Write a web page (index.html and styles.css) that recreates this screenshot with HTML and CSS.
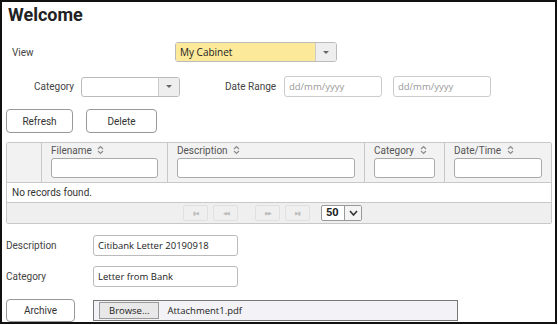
FILE: index.html
```html
<!DOCTYPE html>
<html lang="en">
  <head>
    <meta charset="UTF-8" />
    <title>Welcome</title>
    <link rel="stylesheet" href="styles.css">
  </head>
  <body>
    <div class="frame">
      <h1>Welcome</h1>

      <div class="row row-view">
        <label class="lbl-view">View</label>
        <div class="combo combo-view">
          <span class="combo-text">My Cabinet</span>
          <span class="combo-btn"><span class="caret"></span></span>
        </div>
      </div>

      <div class="row row-filter">
        <label class="lbl-cat">Category</label>
        <div class="combo combo-cat">
          <span class="combo-text"></span>
          <span class="combo-btn"><span class="caret"></span></span>
        </div>
        <label class="lbl-range">Date Range</label>
        <input class="date" type="text" placeholder="dd/mm/yyyy" />
        <input class="date date2" type="text" placeholder="dd/mm/yyyy" />
      </div>

      <div class="row row-buttons">
        <button class="btn btn-refresh">Refresh</button>
        <button class="btn btn-delete">Delete</button>
      </div>

      <div class="grid">
        <div class="grid-head">
          <div class="col col-sel"></div>
          <div class="col col-file">
            <span class="th">Filename <svg class="sort" width="7" height="10" viewBox="0 0 7 10"><path d="M1 4 L3.5 1.5 L6 4 M1 6 L3.5 8.5 L6 6" fill="none" stroke="#8a8a8a" stroke-width="1.2"/></svg></span>
            <input class="filter" type="text" />
          </div>
          <div class="col col-desc">
            <span class="th">Description <svg class="sort" width="7" height="10" viewBox="0 0 7 10"><path d="M1 4 L3.5 1.5 L6 4 M1 6 L3.5 8.5 L6 6" fill="none" stroke="#8a8a8a" stroke-width="1.2"/></svg></span>
            <input class="filter" type="text" />
          </div>
          <div class="col col-cat">
            <span class="th">Category <svg class="sort" width="7" height="10" viewBox="0 0 7 10"><path d="M1 4 L3.5 1.5 L6 4 M1 6 L3.5 8.5 L6 6" fill="none" stroke="#8a8a8a" stroke-width="1.2"/></svg></span>
            <input class="filter" type="text" />
          </div>
          <div class="col col-date">
            <span class="th">Date/Time <svg class="sort" width="7" height="10" viewBox="0 0 7 10"><path d="M1 4 L3.5 1.5 L6 4 M1 6 L3.5 8.5 L6 6" fill="none" stroke="#8a8a8a" stroke-width="1.2"/></svg></span>
            <input class="filter" type="text" />
          </div>
        </div>
        <div class="grid-empty">No records found.</div>
        <div class="pager">
          <span class="pg">&#9646;&#9664;</span>
          <span class="pg">&#9664;&#9664;</span>
          <span class="pg pg-gap">&#9654;&#9654;</span>
          <span class="pg">&#9654;&#9646;</span>
          <div class="rows">
            <span class="rows-val">50</span>
            <span class="rows-btn">
              <svg width="9" height="6" viewBox="0 0 9 6"><path d="M1 1 L4.5 5 L8 1" fill="none" stroke="#333" stroke-width="1.6"/></svg>
            </span>
          </div>
        </div>
      </div>

      <div class="row row-field row-desc">
        <label class="lbl-field">Description</label>
        <input class="field" type="text" value="Citibank Letter 20190918" />
      </div>

      <div class="row row-field">
        <label class="lbl-field">Category</label>
        <input class="field" type="text" value="Letter from Bank" />
      </div>

      <div class="row row-archive">
        <button class="btn btn-archive">Archive</button>
        <div class="file">
          <span class="browse">Browse...</span>
          <span class="file-name">Attachment1.pdf</span>
        </div>
      </div>
    </div>
  </body>
</html>
```

FILE: styles.css
```css
body {
  margin: 0;
  background: #fff;
  font-family: Roboto, "Liberation Sans", Arial, sans-serif;
  font-size: 10px;
  color: #333;
}

.frame {
  box-sizing: border-box;
  width: 557px;
  height: 324px;
  border: 2px solid #111;
  padding: 0 0 0 4px;
  overflow: hidden;
}

h1 {
  margin: 0;
  padding: 3px 0 0 2px;
  font-size: 18px;
  font-weight: bold;
  color: #222;
  line-height: 20px;
}

.row {
  display: flex;
  align-items: center;
}

label {
  color: #444;
}

/* view row */
.row-view {
  margin-top: 17px;
  height: 20px;
}

.lbl-view {
  width: 163px;
  padding-left: 6px;
}

.combo {
  box-sizing: border-box;
  display: flex;
  height: 20px;
  border: 1px solid #bbb;
  border-radius: 3px;
  overflow: hidden;
}

.combo-text {
  flex: 1;
  padding: 0 4px;
  line-height: 18px;
  font-family: "Open Sans", sans-serif;
  font-size: 10px;
  color: #222;
}

.combo-btn {
  width: 20px;
  border-left: 1px solid #ccc;
  background: #eeeeef;
  display: flex;
  align-items: center;
  justify-content: center;
}

.caret {
  width: 0;
  height: 0;
  border-left: 3px solid transparent;
  border-right: 3px solid transparent;
  border-top: 3px solid #666;
}

.combo-view {
  width: 162px;
}

.combo-view .combo-text {
  background: #fde99a;
}

/* filter row */
.row-filter {
  margin-top: 14px;
  height: 21px;
}

.lbl-cat {
  padding-left: 28px;
  width: 47px;
}

.combo-cat {
  width: 99px;
}

.lbl-range {
  margin-left: 45px;
  width: 59px;
}

.date {
  box-sizing: border-box;
  width: 98px;
  height: 21px;
  border: 1px solid #ccc;
  border-radius: 3px;
  padding: 0 4px;
  font-family: "Open Sans", sans-serif;
  font-size: 9.5px;
}

.date::placeholder {
  color: #999;
}

.date2 {
  margin-left: 11px;
}

/* buttons */
.row-buttons {
  margin-top: 12px;
  gap: 13px;
}

.btn {
  box-sizing: border-box;
  height: 24px;
  background: #fff;
  border: 1px solid #999;
  border-radius: 4px;
  font-family: Roboto, sans-serif;
  font-size: 10px;
  color: #333;
  padding: 0;
}

.btn-refresh {
  width: 67px;
}

.btn-delete {
  width: 71px;
}

/* grid */
.grid {
  box-sizing: border-box;
  margin-top: 9px;
  width: 546px;
  border: 1px solid #c8c8c8;
  border-radius: 2px;
}

.grid-head {
  display: flex;
  height: 39px;
  background: #f2f2f2;
  border-bottom: 1px solid #c8c8c8;
}

.col {
  box-sizing: border-box;
  border-left: 1px solid #c8c8c8;
  padding: 2px 9px 0;
  display: flex;
  flex-direction: column;
  gap: 1px;
}

.col-sel {
  width: 34px;
  border-left: none;
}

.col-file {
  width: 126px;
}

.col-desc {
  width: 197px;
}

.col-cat {
  width: 80px;
}

.col-date {
  flex: 1;
}

.th {
  color: #555;
  line-height: 12px;
}

.sort {
  margin-left: 3px;
  vertical-align: -1px;
}

.filter {
  box-sizing: border-box;
  width: 100%;
  height: 20px;
  border: 1px solid #aaa;
  border-radius: 3px;
  background: #fff;
}

.grid-empty {
  height: 19px;
  line-height: 19px;
  padding-left: 5px;
  border-bottom: 1px solid #c8c8c8;
}

.pager {
  display: flex;
  align-items: center;
  height: 20px;
  background: #efefef;
  padding-left: 176px;
  gap: 5px;
}

.pg {
  box-sizing: border-box;
  width: 25px;
  height: 16px;
  border: 1px solid #e0e0e0;
  border-radius: 2px;
  font-size: 5px;
  color: #bbb;
  letter-spacing: -1px;
  text-align: center;
  line-height: 14px;
}

.pg-gap {
  margin-left: 12px;
}

.rows {
  box-sizing: border-box;
  display: flex;
  margin-left: 6px;
  width: 41px;
  height: 16px;
  border: 1px solid #999;
  border-radius: 2px;
  background: #fff;
}

.rows-val {
  flex: 1;
  font-weight: bold;
  font-size: 11px;
  color: #222;
  line-height: 14px;
  padding-left: 4px;
}

.rows-btn {
  width: 16px;
  border-left: 1px solid #999;
  background: #f4f4f4;
  display: flex;
  align-items: center;
  justify-content: center;
}

/* form fields */
.row-field {
  height: 21px;
}

.row-desc {
  margin-top: 11px;
}

.row-field + .row-field {
  margin-top: 10px;
}

.lbl-field {
  width: 87px;
  color: #444;
}

.field {
  box-sizing: border-box;
  width: 145px;
  height: 21px;
  border: 1px solid #bbb;
  border-radius: 3px;
  padding: 0 4px;
  font-family: "Open Sans", sans-serif;
  font-size: 9.5px;
  color: #222;
}

.row-archive {
  margin-top: 12px;
}

.btn-archive {
  width: 69px;
  height: 23px;
}

.file {
  box-sizing: border-box;
  display: flex;
  align-items: center;
  margin-left: 18px;
  width: 365px;
  height: 21px;
  border: 1px solid #777;
  background: #f3f3f7;
  padding-left: 5px;
  font-family: "Open Sans", sans-serif;
  font-size: 9.5px;
  color: #222;
}

.browse {
  box-sizing: border-box;
  height: 17px;
  line-height: 15px;
  padding: 0 9px;
  border: 1px solid #999;
  background: #e8e8e8;
}

.file-name {
  margin-left: 8px;
}
```
